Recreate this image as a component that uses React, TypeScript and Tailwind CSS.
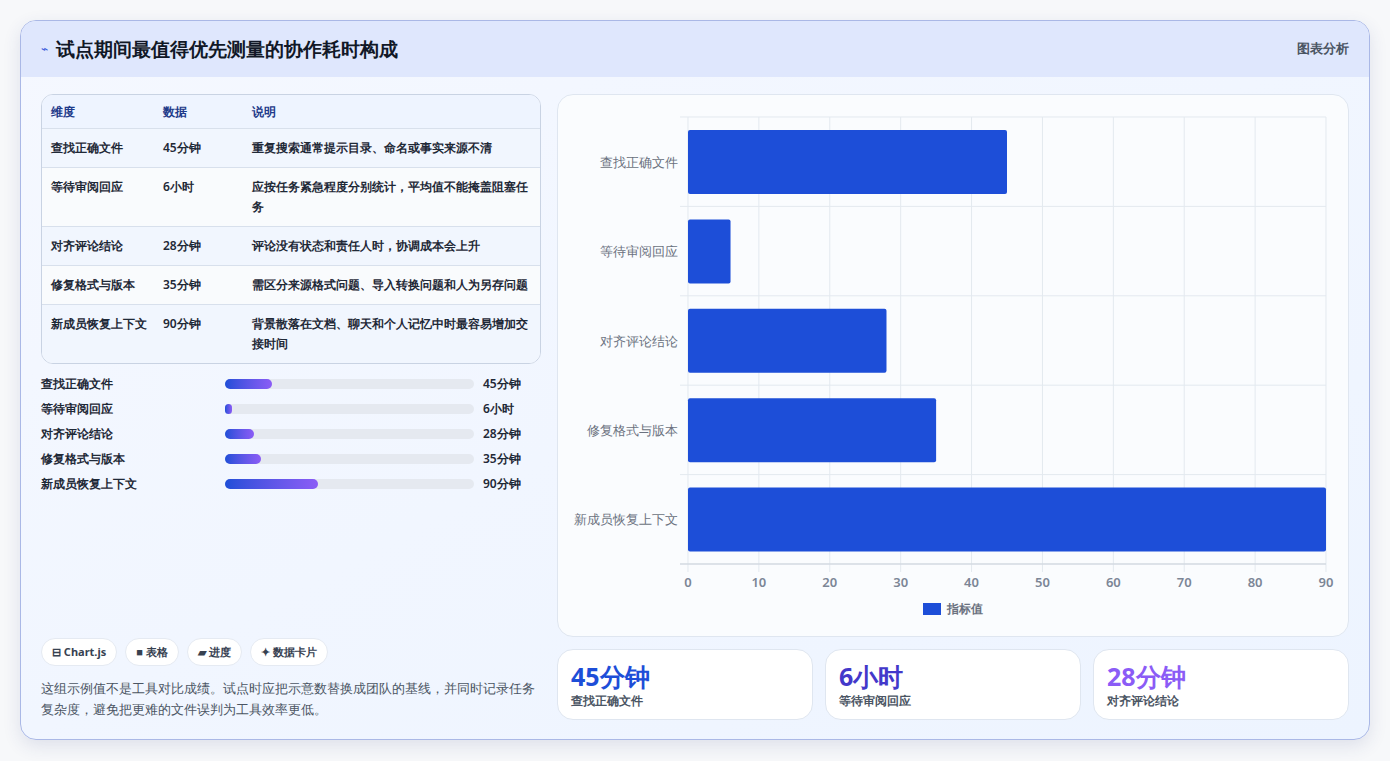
const rows = [
  { name: "查找正确文件", value: "45分钟", v: 45, note: "重复搜索通常提示目录、命名或事实来源不清" },
  { name: "等待审阅回应", value: "6小时", v: 6, note: "应按任务紧急程度分别统计，平均值不能掩盖阻塞任务" },
  { name: "对齐评论结论", value: "28分钟", v: 28, note: "评论没有状态和责任人时，协调成本会上升" },
  { name: "修复格式与版本", value: "35分钟", v: 35, note: "需区分来源格式问题、导入转换问题和人为另存问题" },
  { name: "新成员恢复上下文", value: "90分钟", v: 90, note: "背景散落在文档、聊天和个人记忆中时最容易增加交接时间" },
];

function Chart() {
  const x0 = 130, x1 = 768, y0 = 22, y1 = 469;
  const band = (y1 - y0) / 5;
  const sx = (v: number) => x0 + ((x1 - x0) * v) / 90;
  return (
    <svg width="790" height="542" viewBox="0 0 790 542" className="block">
      {Array.from({ length: 10 }, (_, i) => (
        <line key={"v" + i} x1={sx(i * 10)} x2={sx(i * 10)} y1={y0} y2={y1 + 8} stroke="#e3e9ef" />
      ))}
      {Array.from({ length: 6 }, (_, i) => (
        <line key={"h" + i} x1={x0 - 8} x2={x1} y1={y0 + band * i} y2={y0 + band * i} stroke="#e3e9ef" />
      ))}
      <line x1={x0 - 8} x2={x1} y1={y1} y2={y1} stroke="#cbd2db" />
      {rows.map((r, i) => (
        <g key={r.name}>
          <rect x={x0} y={y0 + band * i + 13} width={sx(r.v) - x0} height={64} rx={2} fill="#1d4ed8" />
          <text x={x0 - 10} y={y0 + band * i + band / 2 + 5} textAnchor="end" fontSize="13" fill="#6b7280">{r.name}</text>
        </g>
      ))}
      {Array.from({ length: 10 }, (_, i) => (
        <text key={"t" + i} x={sx(i * 10)} y={492} textAnchor="middle" fontSize="13" fontWeight="600" fill="#7c8696">{i * 10}</text>
      ))}
      <rect x={365} y={508} width={18} height={12} fill="#1d4ed8" />
      <text x={389} y={518} fontSize="12" fontWeight="600" fill="#6b7280">指标值</text>
    </svg>
  );
}

export default function App() {
  return (
    <div className="min-h-screen bg-[#f7f8fa] p-5 pb-5 font-['Noto_Sans_CJK_SC','Noto_Sans',sans-serif]">
      <div className="flex h-[720px] flex-col overflow-hidden rounded-2xl border border-[#aab8e6] bg-gradient-to-br from-[#f5f8ff] to-[#edf4ff] shadow-[0_6px_18px_rgba(40,60,120,0.12)]">
        <div className="flex h-[56px] items-center justify-between bg-[#dfe7fd] px-5">
          <div className="flex items-center gap-2">
            <span className="text-[12px] text-[#3b5bdb]">⌁</span>
            <h1 className="text-[19px] font-bold text-[#111827]">试点期间最值得优先测量的协作耗时构成</h1>
          </div>
          <span className="text-[13px] font-semibold text-[#4b5563]">图表分析</span>
        </div>
        <div className="flex flex-1 gap-4 px-5 pt-[17px] pb-[19px]">
          <div className="flex w-[505px] flex-col">
            <div className="overflow-hidden rounded-xl border border-[#c9d3e3] bg-white text-[12px]">
              <div className="flex h-[33px] items-center bg-[#eef4ff] font-semibold text-[#1e3a8a]">
                <div className="w-[121px] pl-[9px]">维度</div>
                <div className="w-[89px]">数据</div>
                <div>说明</div>
              </div>
              {rows.map((r, i) => (
                <div key={r.name} className={"flex border-t border-[#d8e0ec] py-[9px] font-semibold text-[#1f2937] leading-[20px] " + (i % 2 ? "bg-[#f9fbfd]" : "bg-[#f1f6fe]")}>
                  <div className="w-[121px] shrink-0 pl-[9px]">{r.name}</div>
                  <div className="w-[89px] shrink-0">{r.value}</div>
                  <div className="pr-3">{r.note}</div>
                </div>
              ))}
            </div>
            <div className="mt-[10px] flex flex-col gap-[6px] text-[12px] font-semibold text-[#1f2937]">
              {rows.map((r) => (
                <div key={r.name} className="flex h-[19px] items-center">
                  <div className="w-[184px]">{r.name}</div>
                  <div className="h-[10px] w-[249px] rounded-full bg-[#e5e9f0]">
                    <div className="h-full rounded-full bg-gradient-to-r from-[#1d4ed8] to-[#8b5cf6]" style={{ width: `${Math.max(r.v / 240 * 100, 3)}%` }} />
                  </div>
                  <div className="ml-[9px]">{r.value}</div>
                </div>
              ))}
            </div>
            <div className="mt-auto">
              <div className="flex gap-2 text-[11px] font-bold text-[#374151]">
                {["⊟ Chart.js", "■ 表格", "▰ 进度", "✦ 数据卡片"].map((c) => (
                  <span key={c} className="rounded-full border border-[#e5eaf2] bg-white px-[10px] py-[5px]">{c}</span>
                ))}
              </div>
              <p className="mt-3 text-[13px] leading-[21px] text-[#4b5563]">这组示例值不是工具对比成绩。试点时应把示意数替换成团队的基线，并同时记录任务复杂度，避免把更难的文件误判为工具效率更低。</p>
            </div>
          </div>
          <div className="flex flex-1 flex-col gap-3">
            <div className="h-[543px] rounded-2xl border border-[#dfe6f0] bg-[#fafcfe]">
              <Chart />
            </div>
            <div className="grid flex-1 grid-cols-3 gap-3">
              {[["45分钟", "查找正确文件", "text-[#1d4ed8]"], ["6小时", "等待审阅回应", "text-[#4338ca]"], ["28分钟", "对齐评论结论", "text-[#8b5cf6]"]].map(([v, l, c]) => (
                <div key={l} className="flex flex-col justify-center rounded-2xl border border-[#dfe6f0] bg-white px-[13px]">
                  <div className={"text-[25px] font-bold leading-[32px] " + c}>{v}</div>
                  <div className="text-[12px] font-semibold text-[#4b5563]">{l}</div>
                </div>
              ))}
            </div>
          </div>
        </div>
      </div>
    </div>
  );
}
